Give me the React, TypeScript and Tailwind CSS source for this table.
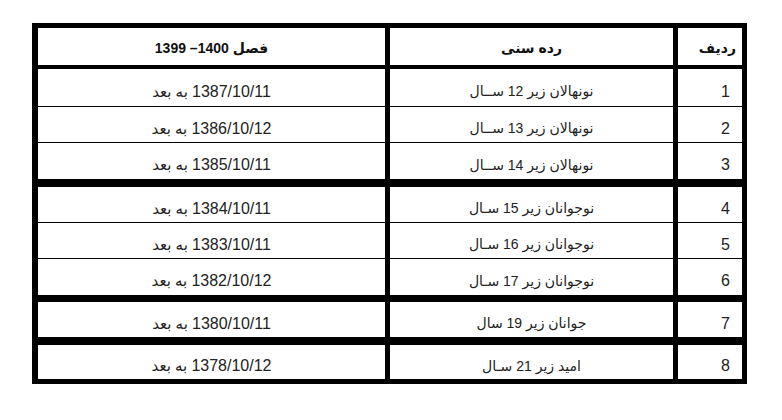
import * as React from 'react';

type Row = { n: string; age: string; date: string; h: string; gap: string };

const rows: Row[] = [
  { n: '1', age: 'نونهالان زیر 12 ســال', date: '1387/10/11 به بعد', h: 'h-[37px]', gap: 'mt-[4px]' },
  { n: '2', age: 'نونهالان زیر 13 ســال', date: '1386/10/12 به بعد', h: 'h-[35px]', gap: 'mt-px' },
  { n: '3', age: 'نونهالان زیر 14 ســال', date: '1385/10/11 به بعد', h: 'h-[36px]', gap: 'mt-px' },
  { n: '4', age: 'نوجوانان زیر 15 سـال', date: '1384/10/11 به بعد', h: 'h-[35px]', gap: 'mt-[8px]' },
  { n: '5', age: 'نوجوانان زیر 16 سـال', date: '1383/10/11 به بعد', h: 'h-[35px]', gap: 'mt-px' },
  { n: '6', age: 'نوجوانان زیر 17 سـال', date: '1382/10/12 به بعد', h: 'h-[36px]', gap: 'mt-px' },
  { n: '7', age: 'جوانان زیر 19 سال', date: '1380/10/11 به بعد', h: 'h-[35px]', gap: 'mt-[7px]' },
  { n: '8', age: 'امید زیر 21 سـال', date: '1378/10/12 به بعد', h: 'h-[34px]', gap: 'mt-[8px]' },
];

const font = { fontFamily: '"Liberation Sans", "DejaVu Sans", sans-serif' };

export default function App() {
  return (
    <div className="w-[782px] h-[420px] bg-white pt-[23px] pl-[32px]" style={font}>
      <div dir="rtl" className="w-[715px] bg-black pl-[6px] pr-[5px] py-[5px] flex flex-col">
        {/* header */}
        <div className="grid grid-cols-[64px_283px_347px] gap-x-[5px] h-[37px] text-[14px] font-bold text-[#111]">
          <div className="bg-white flex items-center pt-[4px] pr-[6px]">ردیف</div>
          <div className="bg-white flex items-center justify-center pt-[4px]">رده سنی</div>
          <div className="bg-white flex items-center justify-center pt-[4px]">فصل 1400– 1399</div>
        </div>

        {rows.map((r) => (
          <div
            key={r.n}
            className={`grid grid-cols-[64px_283px_347px] gap-x-[5px] text-[16px] text-[#222] ${r.h} ${r.gap}`}
          >
            <div className="bg-white flex items-center pt-[8px] pr-[12px]">{r.n}</div>
            <div className="bg-white flex items-center justify-center pt-[8px] text-[14px]">{r.age}</div>
            <div className="bg-white flex items-center justify-center pt-[8px] text-[15px]">
              <span>
                <span className="text-[16px]">{r.date.split(' ')[0]}</span> {r.date.split(' ').slice(1).join(' ')}
              </span>
            </div>
          </div>
        ))}
      </div>
    </div>
  );
}
